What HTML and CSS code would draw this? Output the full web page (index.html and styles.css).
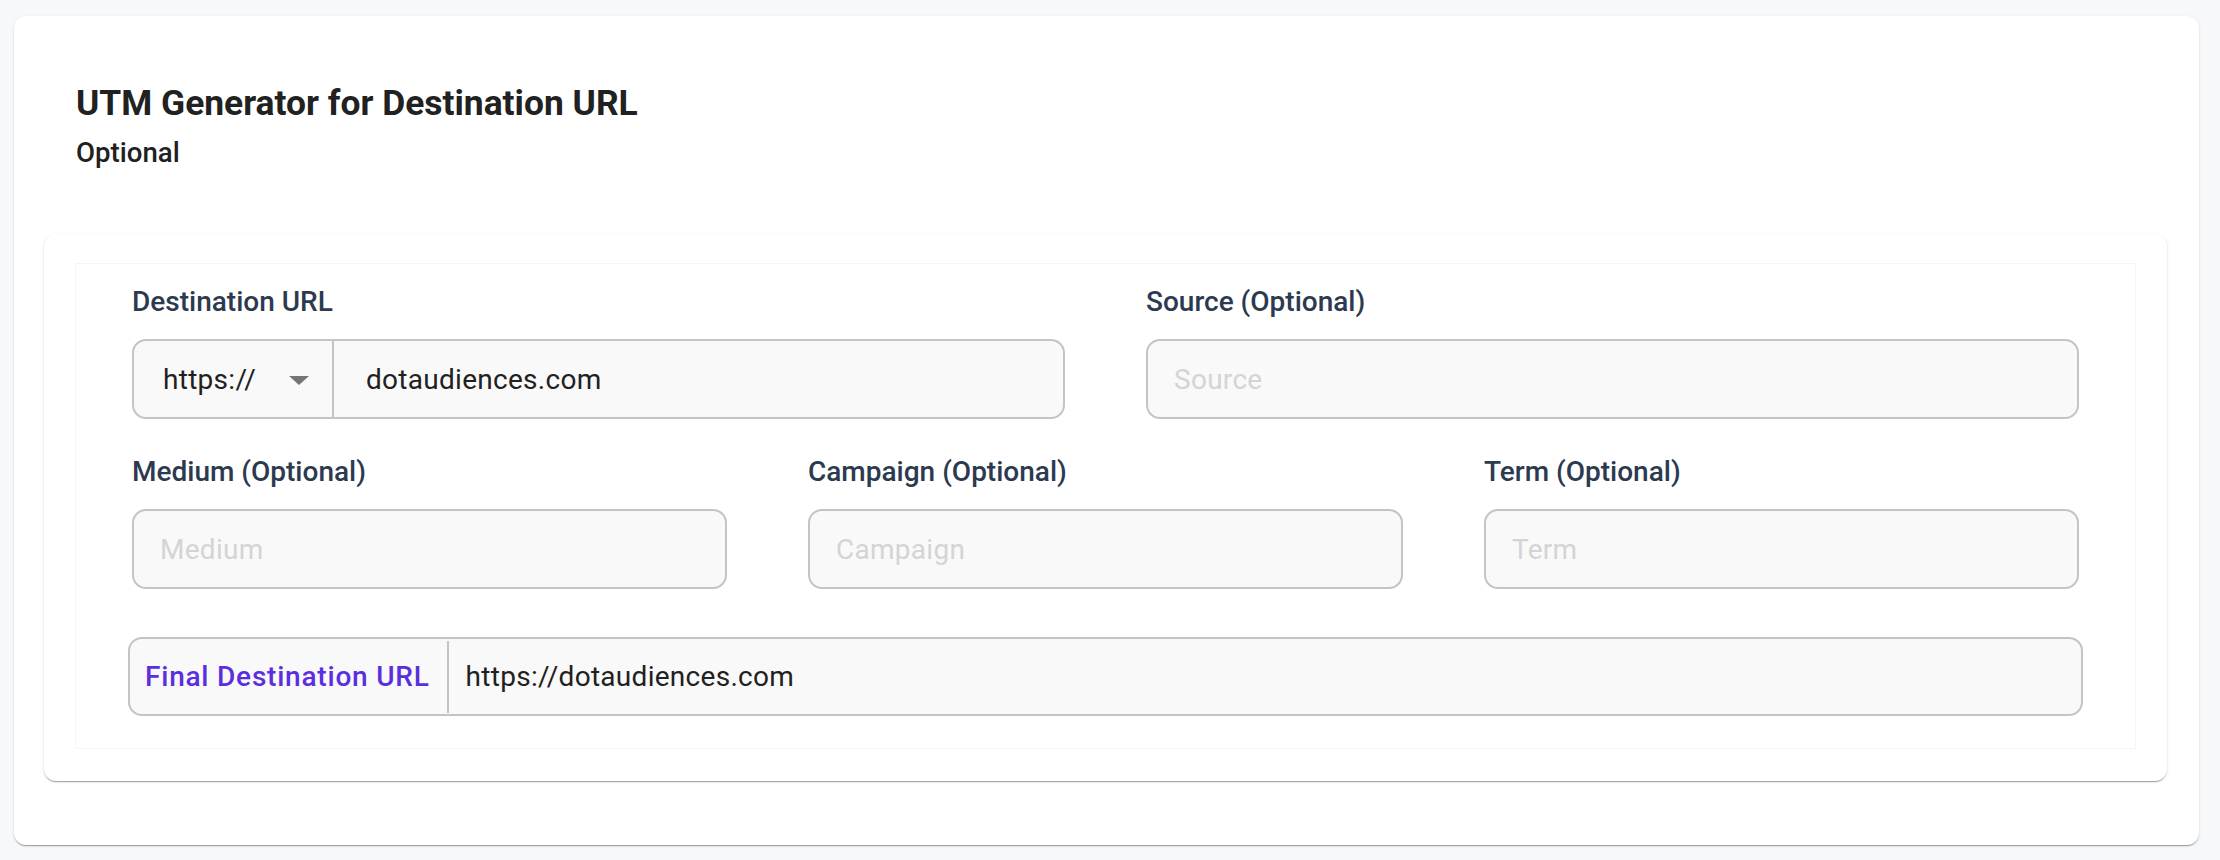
FILE: index.html
```html
<!DOCTYPE html>
<html lang="en">
<head>
<meta charset="utf-8">
<title>UTM Generator</title>
<link rel="stylesheet" href="styles.css">
</head>
<body>
<section class="card">
  <header class="card-header">
    <h1 class="title">UTM Generator for Destination URL</h1>
    <p class="subtitle">Optional</p>
  </header>
  <div class="panel">
    <div class="panel-body">
      <div class="row row-2">
        <div class="field">
          <label class="label">Destination URL</label>
          <div class="input input-split">
            <div class="protocol">
              <span class="protocol-text">https://</span>
              <svg class="caret" viewBox="0 0 20 9" width="20" height="9"><path d="M0 0h20L10 9z" fill="#757575"/></svg>
            </div>
            <span class="value">dotaudiences.com</span>
          </div>
        </div>
        <div class="field">
          <label class="label">Source (Optional)</label>
          <div class="input"><span class="placeholder">Source</span></div>
        </div>
      </div>
      <div class="row row-3">
        <div class="field">
          <label class="label">Medium (Optional)</label>
          <div class="input"><span class="placeholder">Medium</span></div>
        </div>
        <div class="field">
          <label class="label">Campaign (Optional)</label>
          <div class="input"><span class="placeholder">Campaign</span></div>
        </div>
        <div class="field">
          <label class="label">Term (Optional)</label>
          <div class="input"><span class="placeholder">Term</span></div>
        </div>
      </div>
      <div class="final">
        <span class="final-label">Final Destination URL</span>
        <span class="final-divider"></span>
        <span class="final-value">https://dotaudiences.com</span>
      </div>
    </div>
  </div>
</section>
</body>
</html>
```

FILE: styles.css
```css
* { box-sizing: border-box; }

html, body {
  margin: 0;
  background: #f7f8fa;
}

body {
  padding: 16px 21px 15px 14px;
  font-family: Roboto, "Liberation Sans", Arial, sans-serif;
  color: #212121;
}

.card {
  background: #ffffff;
  border-radius: 12px;
  box-shadow: 0 2px 1px -1px rgba(0,0,0,0.2), 0 1px 1px 0 rgba(0,0,0,0.14), 0 1px 3px 0 rgba(0,0,0,0.12);
  padding: 66px 32px 64px 30px;
}

.card-header {
  padding-left: 32px;
}

.title {
  margin: 0;
  font-size: 35.4px;
  line-height: 42px;
  font-weight: 700;
  color: #212121;
}

.subtitle {
  margin: 13px 0 0;
  font-size: 27.6px;
  line-height: 32px;
  font-weight: 500;
  color: #212121;
}

.panel {
  margin-top: 65px;
  background: #ffffff;
  border-radius: 12px;
  box-shadow: 0 2px 1px -1px rgba(0,0,0,0.2), 0 1px 1px 0 rgba(0,0,0,0.14), 0 1px 3px 0 rgba(0,0,0,0.12);
  padding: 29px 31px 32px 31px;
}

.panel-body {
  border: 1px solid #f5f5f5;
  padding: 22px 56px 32px 56px;
}

.row {
  display: grid;
  column-gap: 81px;
}

.row-2 { grid-template-columns: 1fr 1fr; }
.row-3 { grid-template-columns: 1fr 1fr 1fr; margin-top: 37px; }

.field {
  display: flex;
  flex-direction: column;
  min-width: 0;
}

.label {
  font-size: 28px;
  line-height: 32px;
  font-weight: 500;
  color: #2c3a50;
  margin-bottom: 21px;
}

.input {
  height: 80px;
  border: 2px solid #c4c4c4;
  border-radius: 14px;
  background: #f9f9f9;
  display: flex;
  align-items: center;
  padding: 0 26px;
  font-size: 28px;
  letter-spacing: 0.01em;
}

.placeholder {
  color: #d4d4d4;
}

.input-split {
  padding: 0;
}

.protocol {
  width: 200px;
  height: 100%;
  flex: none;
  display: flex;
  align-items: center;
  padding-left: 29px;
  border-right: 2px solid #c4c4c4;
}

.protocol-text {
  color: #212121;
  width: 126px;
}

.caret {
  display: block;
  margin-top: 2px;
}

.value {
  margin-left: 32px;
  color: #212121;
}

.final {
  margin: 48px -4px 0;
  height: 79px;
  border: 2px solid #c4c4c4;
  border-radius: 14px;
  background: #f9f9f9;
  display: flex;
  align-items: stretch;
  padding-left: 15px;
}

.final-label {
  align-self: center;
  font-size: 28px;
  font-weight: 500;
  letter-spacing: 0.028em;
  color: #5b2ee0;
}

.final-divider {
  width: 2px;
  background: #c4c4c4;
  margin: 2px 0 1px 17px;
}

.final-value {
  align-self: center;
  margin-left: 17px;
  font-size: 28px;
  letter-spacing: 0.01em;
  color: #212121;
}
```
